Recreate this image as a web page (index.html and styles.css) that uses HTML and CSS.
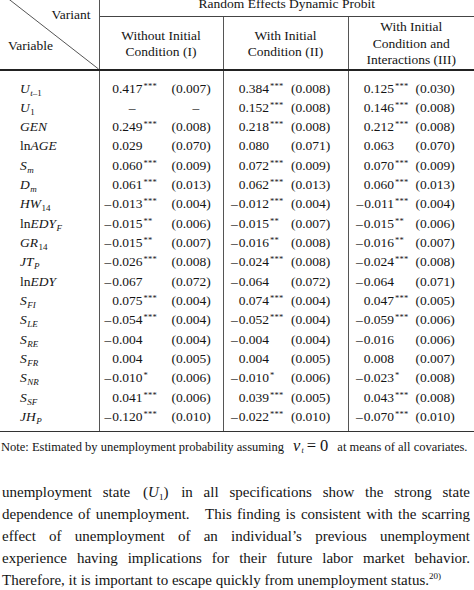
FILE: index.html
```html
<!DOCTYPE html>
<html lang="en">
<head>
<meta charset="utf-8">
<title>Random Effects Dynamic Probit</title>
<link rel="stylesheet" href="styles.css">
</head>
<body>
<div class="page">
<table class="res">
<colgroup><col class="c0"><col class="c1"><col class="c2"><col class="c3"></colgroup>
<thead>
<tr class="h1">
<th class="corner" rowspan="2">
<svg class="diag" viewBox="0 0 99 73" preserveAspectRatio="none" aria-hidden="true"><line x1="3.5" y1="0" x2="99" y2="73" stroke="#555" stroke-width="1" vector-effect="non-scaling-stroke"/></svg>
<div class="corner-in"><div class="variant">Variant</div><div class="variable">Variable</div></div>
</th>
<th class="group" colspan="3">Random Effects Dynamic Probit</th>
</tr>
<tr class="h2">
<th class="k1">Without Initial<br>Condition (I)</th>
<th class="k2">With Initial<br>Condition (II)</th>
<th class="k3">With Initial<br>Condition and<br>Interactions (III)</th>
</tr>
</thead>
<tbody>
<tr class="first">
<td class="var"><i>U</i><span class="sub"><i>t</i>–1</span></td>
<td class="k1"><div class="cell"><span class="v">0.417</span><span class="st">***</span><span class="se">(0.007)</span></div></td>
<td class="k2"><div class="cell"><span class="v">0.384</span><span class="st">***</span><span class="se">(0.008)</span></div></td>
<td class="k3"><div class="cell"><span class="v">0.125</span><span class="st">***</span><span class="se">(0.030)</span></div></td>
</tr>
<tr>
<td class="var"><i>U</i><span class="sub">1</span></td>
<td class="k1"><div class="cell"><span class="v ph">–</span><span class="st"></span><span class="se ph2">–</span></div></td>
<td class="k2"><div class="cell"><span class="v">0.152</span><span class="st">***</span><span class="se">(0.008)</span></div></td>
<td class="k3"><div class="cell"><span class="v">0.146</span><span class="st">***</span><span class="se">(0.008)</span></div></td>
</tr>
<tr>
<td class="var"><i>GEN</i></td>
<td class="k1"><div class="cell"><span class="v">0.249</span><span class="st">***</span><span class="se">(0.008)</span></div></td>
<td class="k2"><div class="cell"><span class="v">0.218</span><span class="st">***</span><span class="se">(0.008)</span></div></td>
<td class="k3"><div class="cell"><span class="v">0.212</span><span class="st">***</span><span class="se">(0.008)</span></div></td>
</tr>
<tr>
<td class="var">ln<i>AGE</i></td>
<td class="k1"><div class="cell"><span class="v">0.029</span><span class="st"></span><span class="se">(0.070)</span></div></td>
<td class="k2"><div class="cell"><span class="v">0.080</span><span class="st"></span><span class="se">(0.071)</span></div></td>
<td class="k3"><div class="cell"><span class="v">0.063</span><span class="st"></span><span class="se">(0.070)</span></div></td>
</tr>
<tr>
<td class="var"><i>S</i><span class="sub"><i>m</i></span></td>
<td class="k1"><div class="cell"><span class="v">0.060</span><span class="st">***</span><span class="se">(0.009)</span></div></td>
<td class="k2"><div class="cell"><span class="v">0.072</span><span class="st">***</span><span class="se">(0.009)</span></div></td>
<td class="k3"><div class="cell"><span class="v">0.070</span><span class="st">***</span><span class="se">(0.009)</span></div></td>
</tr>
<tr>
<td class="var"><i>D</i><span class="sub"><i>m</i></span></td>
<td class="k1"><div class="cell"><span class="v">0.061</span><span class="st">***</span><span class="se">(0.013)</span></div></td>
<td class="k2"><div class="cell"><span class="v">0.062</span><span class="st">***</span><span class="se">(0.013)</span></div></td>
<td class="k3"><div class="cell"><span class="v">0.060</span><span class="st">***</span><span class="se">(0.013)</span></div></td>
</tr>
<tr>
<td class="var"><i>HW</i><span class="sub">14</span></td>
<td class="k1"><div class="cell"><span class="v"><span class="neg">–</span>0.013</span><span class="st">***</span><span class="se">(0.004)</span></div></td>
<td class="k2"><div class="cell"><span class="v"><span class="neg">–</span>0.012</span><span class="st">***</span><span class="se">(0.004)</span></div></td>
<td class="k3"><div class="cell"><span class="v"><span class="neg">–</span>0.011</span><span class="st">***</span><span class="se">(0.004)</span></div></td>
</tr>
<tr>
<td class="var">ln<i>EDY</i><span class="sub"><i>F</i></span></td>
<td class="k1"><div class="cell"><span class="v"><span class="neg">–</span>0.015</span><span class="st">**</span><span class="se">(0.006)</span></div></td>
<td class="k2"><div class="cell"><span class="v"><span class="neg">–</span>0.015</span><span class="st">**</span><span class="se">(0.007)</span></div></td>
<td class="k3"><div class="cell"><span class="v"><span class="neg">–</span>0.015</span><span class="st">**</span><span class="se">(0.006)</span></div></td>
</tr>
<tr>
<td class="var"><i>GR</i><span class="sub">14</span></td>
<td class="k1"><div class="cell"><span class="v"><span class="neg">–</span>0.015</span><span class="st">**</span><span class="se">(0.007)</span></div></td>
<td class="k2"><div class="cell"><span class="v"><span class="neg">–</span>0.016</span><span class="st">**</span><span class="se">(0.008)</span></div></td>
<td class="k3"><div class="cell"><span class="v"><span class="neg">–</span>0.016</span><span class="st">**</span><span class="se">(0.007)</span></div></td>
</tr>
<tr>
<td class="var"><i>JT</i><span class="sub"><i>P</i></span></td>
<td class="k1"><div class="cell"><span class="v"><span class="neg">–</span>0.026</span><span class="st">***</span><span class="se">(0.008)</span></div></td>
<td class="k2"><div class="cell"><span class="v"><span class="neg">–</span>0.024</span><span class="st">***</span><span class="se">(0.008)</span></div></td>
<td class="k3"><div class="cell"><span class="v"><span class="neg">–</span>0.024</span><span class="st">***</span><span class="se">(0.008)</span></div></td>
</tr>
<tr>
<td class="var">ln<i>EDY</i></td>
<td class="k1"><div class="cell"><span class="v"><span class="neg">–</span>0.067</span><span class="st"></span><span class="se">(0.072)</span></div></td>
<td class="k2"><div class="cell"><span class="v"><span class="neg">–</span>0.064</span><span class="st"></span><span class="se">(0.072)</span></div></td>
<td class="k3"><div class="cell"><span class="v"><span class="neg">–</span>0.064</span><span class="st"></span><span class="se">(0.071)</span></div></td>
</tr>
<tr>
<td class="var"><i>S</i><span class="sub"><i>FI</i></span></td>
<td class="k1"><div class="cell"><span class="v">0.075</span><span class="st">***</span><span class="se">(0.004)</span></div></td>
<td class="k2"><div class="cell"><span class="v">0.074</span><span class="st">***</span><span class="se">(0.004)</span></div></td>
<td class="k3"><div class="cell"><span class="v">0.047</span><span class="st">***</span><span class="se">(0.005)</span></div></td>
</tr>
<tr>
<td class="var"><i>S</i><span class="sub"><i>LE</i></span></td>
<td class="k1"><div class="cell"><span class="v"><span class="neg">–</span>0.054</span><span class="st">***</span><span class="se">(0.004)</span></div></td>
<td class="k2"><div class="cell"><span class="v"><span class="neg">–</span>0.052</span><span class="st">***</span><span class="se">(0.004)</span></div></td>
<td class="k3"><div class="cell"><span class="v"><span class="neg">–</span>0.059</span><span class="st">***</span><span class="se">(0.006)</span></div></td>
</tr>
<tr>
<td class="var"><i>S</i><span class="sub"><i>RE</i></span></td>
<td class="k1"><div class="cell"><span class="v"><span class="neg">–</span>0.004</span><span class="st"></span><span class="se">(0.004)</span></div></td>
<td class="k2"><div class="cell"><span class="v"><span class="neg">–</span>0.004</span><span class="st"></span><span class="se">(0.004)</span></div></td>
<td class="k3"><div class="cell"><span class="v"><span class="neg">–</span>0.016</span><span class="st"></span><span class="se">(0.006)</span></div></td>
</tr>
<tr>
<td class="var"><i>S</i><span class="sub"><i>FR</i></span></td>
<td class="k1"><div class="cell"><span class="v">0.004</span><span class="st"></span><span class="se">(0.005)</span></div></td>
<td class="k2"><div class="cell"><span class="v">0.004</span><span class="st"></span><span class="se">(0.005)</span></div></td>
<td class="k3"><div class="cell"><span class="v">0.008</span><span class="st"></span><span class="se">(0.007)</span></div></td>
</tr>
<tr>
<td class="var"><i>S</i><span class="sub"><i>NR</i></span></td>
<td class="k1"><div class="cell"><span class="v"><span class="neg">–</span>0.010</span><span class="st">*</span><span class="se">(0.006)</span></div></td>
<td class="k2"><div class="cell"><span class="v"><span class="neg">–</span>0.010</span><span class="st">*</span><span class="se">(0.006)</span></div></td>
<td class="k3"><div class="cell"><span class="v"><span class="neg">–</span>0.023</span><span class="st">*</span><span class="se">(0.008)</span></div></td>
</tr>
<tr>
<td class="var"><i>S</i><span class="sub"><i>SF</i></span></td>
<td class="k1"><div class="cell"><span class="v">0.041</span><span class="st">***</span><span class="se">(0.006)</span></div></td>
<td class="k2"><div class="cell"><span class="v">0.039</span><span class="st">***</span><span class="se">(0.005)</span></div></td>
<td class="k3"><div class="cell"><span class="v">0.043</span><span class="st">***</span><span class="se">(0.008)</span></div></td>
</tr>
<tr class="last">
<td class="var"><i>JH</i><span class="sub"><i>P</i></span></td>
<td class="k1"><div class="cell"><span class="v"><span class="neg">–</span>0.120</span><span class="st">***</span><span class="se">(0.010)</span></div></td>
<td class="k2"><div class="cell"><span class="v"><span class="neg">–</span>0.022</span><span class="st">***</span><span class="se">(0.010)</span></div></td>
<td class="k3"><div class="cell"><span class="v"><span class="neg">–</span>0.070</span><span class="st">***</span><span class="se">(0.010)</span></div></td>
</tr>
</tbody>
</table>
<p class="note">Note: Estimated by unemployment probability assuming <span class="m"><i>v</i><span class="msub"><i>t</i></span><span class="eq">=</span>0</span> at means of all covariates.</p>
<div class="para">
<div class="ln">unemployment state <span class="pu">(<i>U</i><span class="psub">1</span>)</span> in all specifications show the strong state</div>
<div class="ln">dependence of unemployment.&nbsp;&nbsp; This finding is consistent with the scarring</div>
<div class="ln">effect of unemployment of an individual’s previous unemployment</div>
<div class="ln">experience having implications for their future labor market behavior.</div>
<div class="ln end">Therefore, it is important to escape quickly from unemployment status.<span class="psup">20)</span></div>
</div>
</div>
</body>
</html>
```
FILE: styles.css
```css
html, body {
  margin: 0;
  padding: 0;
  background: #ffffff;
}
body {
  width: 474px;
  height: 590px;
  overflow: hidden;
  font-family: "Liberation Serif", "Times New Roman", serif;
  color: #141414;
}
.page {
  margin-top: -5px;
}
table.res {
  border-collapse: collapse;
  table-layout: fixed;
  width: 474px;
  font-size: 13.5px;
}
col.c0 { width: 99px; }
col.c1 { width: 124px; }
col.c2 { width: 125px; }
col.c3 { width: 126px; }

th {
  font-weight: 400;
  padding: 0;
}
.corner {
  position: relative;
  vertical-align: top;
  border-right: 1px solid #555;
  border-bottom: 2px solid #222;
}
.diag {
  position: absolute;
  left: 0;
  top: 0;
  width: 100%;
  height: 100%;
}
.corner-in {
  position: relative;
  height: 73px;
  line-height: 16px;
}
.variant {
  text-align: right;
  padding-right: 8px;
  padding-top: 12px;
}
.variable {
  text-align: left;
  padding-left: 8px;
  margin-top: 15px;
}
.group {
  height: 20px;
  line-height: 16px;
  padding-top: 1px;
  vertical-align: top;
  text-align: center;
  border-bottom: 1px solid #444;
}
.h2 th {
  height: 50px;
  line-height: 16.5px;
  padding-top: 2px;
  vertical-align: middle;
  text-align: center;
  border-bottom: 2px solid #222;
}
.h2 th.k2, .h2 th.k3,
td.k2, td.k3 {
  border-left: 1px solid #555;
}
td {
  padding: 0;
  height: 19.33px;
  line-height: 19.33px;
  white-space: nowrap;
}
tr.first td { padding-top: 7.5px; }
tr.last td {
  padding-bottom: 5px;
  border-bottom: 1px solid #333;
}
td.var {
  padding-left: 20px;
  border-right: 1px solid #555;
}
.sub {
  font-size: 9px;
  line-height: 0;
  vertical-align: -3px;
  margin-left: 0.5px;
}
.cell {
  display: grid;
  align-items: start;
}
td.k1 .cell { grid-template-columns: 43px 29px auto; }
td.k2 .cell { grid-template-columns: 45.5px 22px auto; }
td.k3 .cell { grid-template-columns: 45.5px 21.5px auto; }
.v {
  text-align: right;
}
.neg {
  margin-right: 1px;
}
.st {
  font-size: 8.5px;
  line-height: 1;
  padding-top: 3px;
  padding-left: 1px;
  letter-spacing: 0.3px;
}
.ph {
  padding-right: 7px;
}
.ph2 {
  padding-left: 21px;
}

.note {
  margin: 5px 0 0 1px;
  font-size: 12.5px;
  line-height: 20px;
  white-space: nowrap;
}
.m {
  font-size: 16.5px;
  line-height: 1;
  margin: 0 6px 0 6px;
}
.msub {
  font-size: 8px;
  vertical-align: -2px;
  line-height: 0;
  margin-left: 1px;
}
.eq {
  margin: 0 4px 0 3px;
}

.para {
  margin-top: 24px;
  padding: 0 4px 0 2px;
  font-size: 15px;
  line-height: 22px;
}
.ln {
  text-align: justify;
  text-align-last: justify;
  white-space: nowrap;
}
.ln.end {
  text-align-last: left;
}
.pu {
  margin: 0 2px;
}
.psub {
  font-size: 9px;
  vertical-align: -3px;
  line-height: 0;
}
.psup {
  font-size: 9px;
  vertical-align: 6px;
  line-height: 0;
}
```
